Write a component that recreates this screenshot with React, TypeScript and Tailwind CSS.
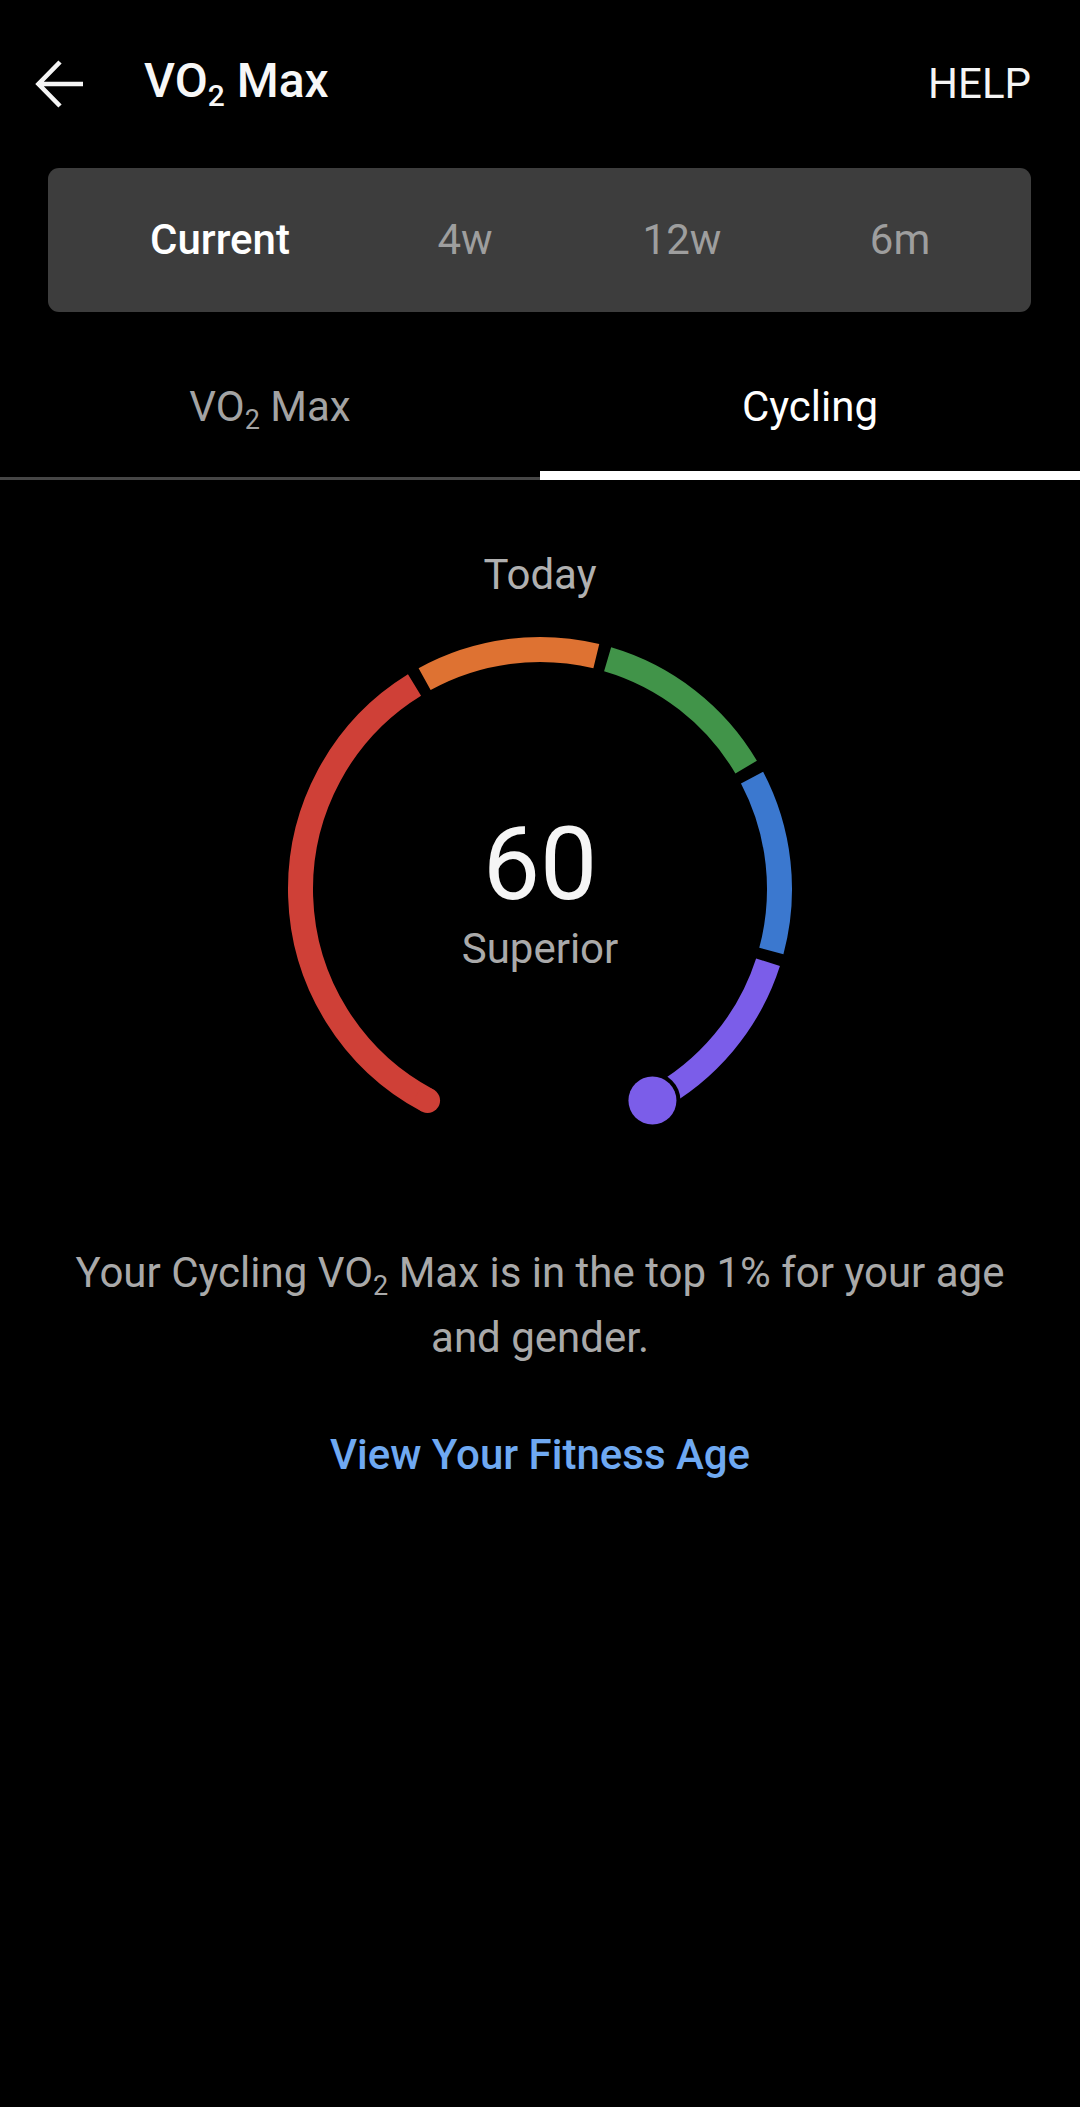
import React from "react";

const CX = 260;
const CY = 260;
const R = 239.5;

function pt(a: number, r: number = R) {
  const rad = (a * Math.PI) / 180;
  return [CX + r * Math.sin(rad), CY - r * Math.cos(rad)];
}

function arc(a: number, b: number) {
  const [x1, y1] = pt(a);
  const [x2, y2] = pt(b);
  const large = b - a > 180 ? 1 : 0;
  return `M ${x1.toFixed(2)} ${y1.toFixed(2)} A ${R} ${R} 0 ${large} 1 ${x2.toFixed(2)} ${y2.toFixed(2)}`;
}

const segs = [
  { c: "#cf4037", a: -152, b: -31.6 },
  { c: "#de7232", a: -28.8, b: 13.6 },
  { c: "#419449", a: 16.4, b: 59.4 },
  { c: "#3b78cf", a: 62.3, b: 105.0 },
  { c: "#7b5de9", a: 107.8, b: 152 },
];

function Gauge() {
  const [sx, sy] = pt(-152);
  const [dx, dy] = pt(152);
  return (
    <div className="relative mx-auto mt-[29px] h-[520px] w-[520px]">
      <svg width="520" height="520" viewBox="0 0 520 520">
        {segs.map((s, i) => (
          <path key={i} d={arc(s.a, s.b)} stroke={s.c} strokeWidth={25} fill="none" strokeLinecap="butt" />
        ))}
        <circle cx={sx} cy={sy} r={12.5} fill="#cf4037" />
        <circle cx={dx} cy={dy} r={28} fill="#000" />
        <circle cx={dx} cy={dy} r={24} fill="#7b5de9" />
      </svg>
      <div className="absolute left-0 right-0 top-[175px] flex flex-col items-center">
        <div className="text-[102px] leading-[120px] text-[#f5f5f5]">60</div>
        <div className="mt-0 text-[42px] leading-[50px] text-[#aaaaaa]">Superior</div>
      </div>
    </div>
  );
}

export default function App() {
  return (
    <div
      className="min-h-[2107px] w-[1080px] bg-black text-white"
      style={{ fontFamily: "Roboto, 'Noto Sans', sans-serif" }}
    >
      {/* header */}
      <div className="flex h-[168px] items-center">
        <div className="ml-[35px] flex h-[50px] w-[50px] items-center justify-center">
          <svg width="50" height="50" viewBox="0 0 50 50" fill="none">
            <path d="M48 25H4M25 3L3.5 25L25 47" stroke="#f5f5f5" strokeWidth="4.6" strokeLinecap="butt" strokeLinejoin="miter" />
          </svg>
        </div>
        <div className="ml-[59px] text-[48px] font-medium leading-[56px] text-[#f7f7f7]">
          VO<span className="relative top-[9px] text-[30px]">2</span> Max
        </div>
        <div className="ml-auto mr-[49px] text-[42px] leading-[50px] text-[#f5f5f5]">HELP</div>
      </div>

      {/* segmented */}
      <div className="mx-[48px] mr-[49px] flex h-[144px] items-center rounded-[11px] bg-[#3d3d3d] text-[42px] leading-[50px]">
        <div className="ml-[72px] w-[200px] text-center font-medium text-white">Current</div>
        <div className="ml-[45px] w-[200px] text-center text-[#9e9e9e]">4w</div>
        <div className="ml-[17px] w-[200px] text-center text-[#9e9e9e]">12w</div>
        <div className="ml-[18px] w-[200px] text-center text-[#9e9e9e]">6m</div>
      </div>

      {/* tabs */}
      <div className="flex h-[168px]">
        <div className="flex flex-1 flex-col">
          <div className="mt-[70px] text-center text-[42px] leading-[50px] text-[#a3a3a3]">
            VO<span className="relative top-[8px] text-[27px]">2</span> Max
          </div>
          <div className="mt-auto h-[3px] bg-[#464646]" />
        </div>
        <div className="flex flex-1 flex-col">
          <div className="mt-[70px] text-center text-[42px] leading-[50px] text-white">Cycling</div>
          <div className="mt-auto h-[9px] bg-white" />
        </div>
      </div>

      {/* today */}
      <div className="mt-[70px] text-center text-[42px] leading-[50px] text-[#b0b0b0]">Today</div>

      <Gauge />

      <p className="mt-[94px] px-[50px] text-center text-[42px] leading-[60px] text-[#a9a9a9]">
        Your Cycling VO<span className="relative top-[8px] text-[27px]">2</span> Max is in the top 1% for your age and gender.
      </p>

      <div className="mt-[57px] text-center text-[42px] font-medium leading-[60px] text-[#6fa9f2]">
        View Your Fitness Age
      </div>
    </div>
  );
}
